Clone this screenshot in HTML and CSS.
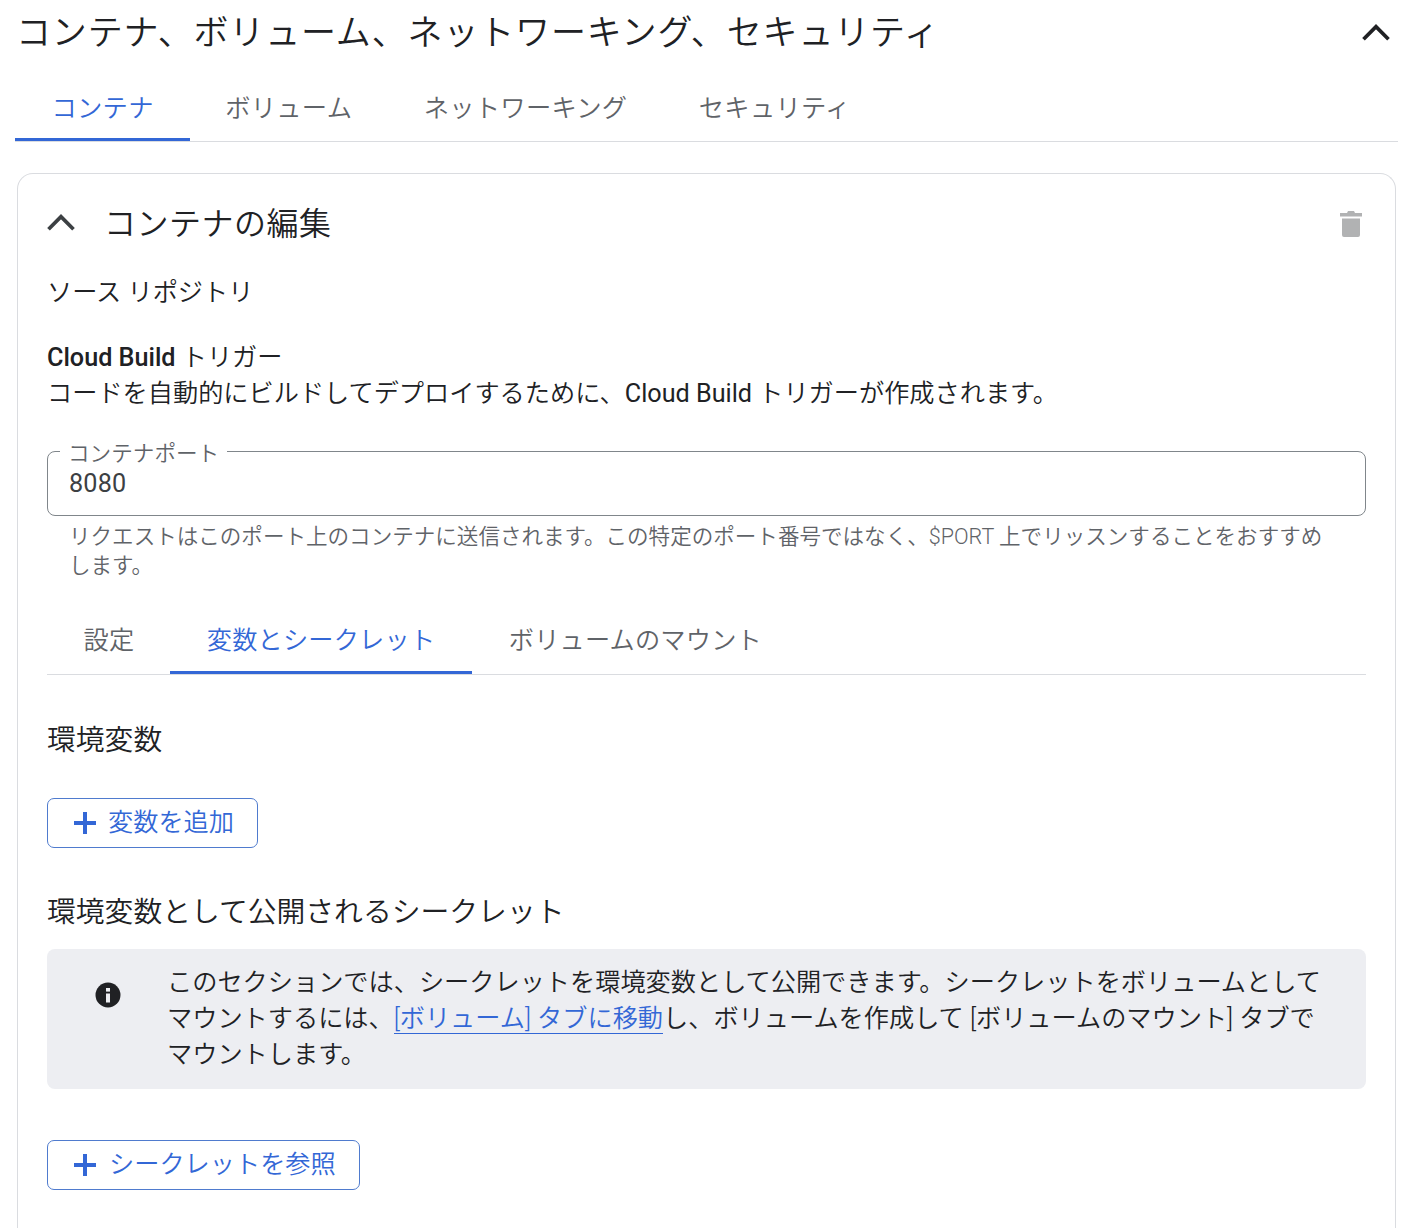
FILE: index.html
```html
<!DOCTYPE html>
<html lang="ja">
<head>
<meta charset="utf-8">
<title>コンテナの編集</title>
<link rel="stylesheet" href="styles.css">
</head>
<body>
<div class="page">
  <header class="page-head">
    <h1 class="page-title">コンテナ、ボリューム、ネットワーキング、セキュリティ</h1>
    <svg class="chev chev-top" viewBox="0 0 24 24"><path d="M2 17 12 7l10 10" /></svg>
  </header>
  <nav class="tabs tabs-main">
    <a class="tab tab-main active">コンテナ</a>
    <a class="tab tab-main">ボリューム</a>
    <a class="tab tab-main">ネットワーキング</a>
    <a class="tab tab-main">セキュリティ</a>
  </nav>
  <section class="card">
    <div class="card-head">
      <svg class="chev chev-card" viewBox="0 0 24 24"><path d="M2 17 12 7l10 10" /></svg>
      <h2 class="card-title">コンテナの編集</h2>
      <svg class="trash" viewBox="0 0 22 26"><path d="M7 2 8 0h6l1 2h7v3.500H0V2zM2 7.500h18V24a2 2 0 0 1-2 2H4a2 2 0 0 1-2-2z" /></svg>
    </div>
    <p class="source">ソース リポジトリ</p>
    <div class="trigger">
      <p><span class="trigger-name">Cloud Build</span> トリガー</p>
      <p>コードを自動的にビルドしてデプロイするために、<span class="latin">Cloud Build</span> トリガーが作成されます。</p>
    </div>
    <div class="field">
      <span class="field-label">コンテナポート</span>
      <span class="field-value">8080</span>
    </div>
    <p class="hint">リクエストはこのポート上のコンテナに送信されます。この特定のポート番号ではなく、$PORT 上でリッスンすることをおすすめします。</p>
    <nav class="tabs tabs-sub">
      <a class="tab tab-sub">設定</a>
      <a class="tab tab-sub active">変数とシークレット</a>
      <a class="tab tab-sub">ボリュームのマウント</a>
    </nav>
    <h3 class="section-title env-title">環境変数</h3>
    <button class="btn btn-var"><svg class="plus" viewBox="0 0 22 22"><path d="M11 0v22M0 11h22" /></svg><span class="btn-label">変数を追加</span></button>
    <h3 class="section-title secret-title">環境変数として公開されるシークレット</h3>
    <div class="notice">
      <svg class="info" viewBox="0 0 26 26"><circle cx="13" cy="13" r="12.500" /><rect class="info-mark" x="11" y="11.500" width="4" height="9" /><rect class="info-mark" x="11" y="6" width="4" height="3.600" /></svg>
      <p class="notice-text">このセクションでは、シークレットを環境変数として公開できます。シークレットをボリュームとしてマウントするには、<a class="link">[ボリューム] タブに移動</a>し、ボリュームを作成して [ボリュームのマウント] タブでマウントします。</p>
    </div>
    <button class="btn btn-secret"><svg class="plus" viewBox="0 0 22 22"><path d="M11 0v22M0 11h22" /></svg><span class="btn-label">シークレットを参照</span></button>
  </section>
</div>
</body>
</html>
```
FILE: styles.css
```css
* { box-sizing: border-box; }
html, body { margin: 0; padding: 0; background: #fff; }
body {
  font-family: Roboto, "Noto Sans CJK JP", sans-serif;
  font-weight: 350;
  color: #202124;
  height: 1228px;
  overflow: hidden;
}
h1, h2, h3, p { margin: 0; font-weight: 350; }
.page { padding: 0 24px 0 15px; }
.page-head { display: flex; align-items: center; justify-content: space-between; height: 66px; padding: 0 7px 0 1px; }
.page-title { font-size: 35px; letter-spacing: 0.85px; line-height: 66px; padding-top: 2px; white-space: nowrap; }
.chev { fill: none; stroke-width: 3; flex: none; }
.chev-top { width: 30px; height: 30px; stroke: #202124; }
.tabs { display: flex; }
.tabs-main { height: 76px; border-bottom: 1px solid #dadce0; }
.tab { display: flex; align-items: center; color: #5f6368; white-space: nowrap; }
.tab.active { color: #3367d6; border-bottom: 3px solid #3367d6; }
.tab-main { font-size: 25.300px; letter-spacing: 0.25px; padding: 4px 36px 0 35.500px; }
.tab-main.active { padding: 7px 36px 0 36.500px; }
.card { margin: 31px 2px 0; border: 1px solid #dadce0; border-bottom: 0; border-radius: 16px 16px 0 0; padding: 0 29px; height: 1100px; }
.card-head { display: flex; align-items: center; height: 98px; }
.chev-card { width: 30px; height: 30px; stroke: #3c4043; margin-left: -1px; }
.card-title { font-size: 32px; letter-spacing: 0.5px; margin-left: 28px; padding-bottom: 4px; flex: 1; }
.trash { width: 22px; height: 26px; fill: #b1b2b3; margin: 2px 4px 0 0; flex: none; }
.source { font-size: 25.200px; line-height: 36px; margin-top: 3px; }
.trigger { margin-top: 29px; font-size: 25.200px; line-height: 36px; }
.trigger-name { font-weight: 500; }
.latin { font-weight: 400; }
.field { margin-top: 39px; height: 65px; border: 1px solid #80868b; border-radius: 8px; padding: 0 21px; position: relative; display: flex; align-items: center; }
.field-label { position: absolute; left: 12px; top: -10px; padding: 0 8px; background: #fff; font-size: 21.600px; line-height: 24px; color: #5f6368; }
.field-value { font-size: 25.200px; font-weight: 400; color: #3c4043; letter-spacing: 0.2px; }
.hint { margin-top: 6px; padding: 0 40px 0 22px; font-size: 21.550px; line-height: 29px; color: #5f6368; }
.tabs-sub { margin-top: 19px; height: 76px; border-bottom: 1px solid #dadce0; }
.tab-sub { font-size: 25.200px; letter-spacing: 0.2px; padding: 2px 36px 0 36.500px; }
.tab-sub.active { padding: 5px 37px 0 36.500px; }
.section-title { font-size: 28.800px; line-height: 40px; }
.env-title { margin-top: 45px; }
.btn { display: flex; align-items: center; height: 50px; background: #fff; border: 1px solid #4f7bce; border-radius: 7px; color: #3367d6; font-family: inherit; font-weight: 350; font-size: 25.200px; padding: 0 23px 0 26px; }
.btn-label { padding-bottom: 6px; }
.btn-var { margin-top: 38px; }
.plus { width: 22px; height: 22px; stroke: #3367d6; stroke-width: 4; margin-right: 12px; fill: none; flex: none; }
.btn-secret .plus { margin-right: 13px; }
.secret-title { margin-top: 44px; }
.notice { margin-top: 17px; background: #edeef2; border-radius: 8px; display: flex; height: 140px; padding: 16px 30px 0 48px; }
.info { width: 26px; height: 26px; fill: #202124; margin-top: 17px; flex: none; }
.info-mark { fill: #edeef2; }
.notice-text { margin-left: 46px; font-size: 25.200px; line-height: 36px; }
.link { color: #3367d6; border-bottom: 1px solid #3367d6; }
.btn-secret { margin-top: 51px; }
```
